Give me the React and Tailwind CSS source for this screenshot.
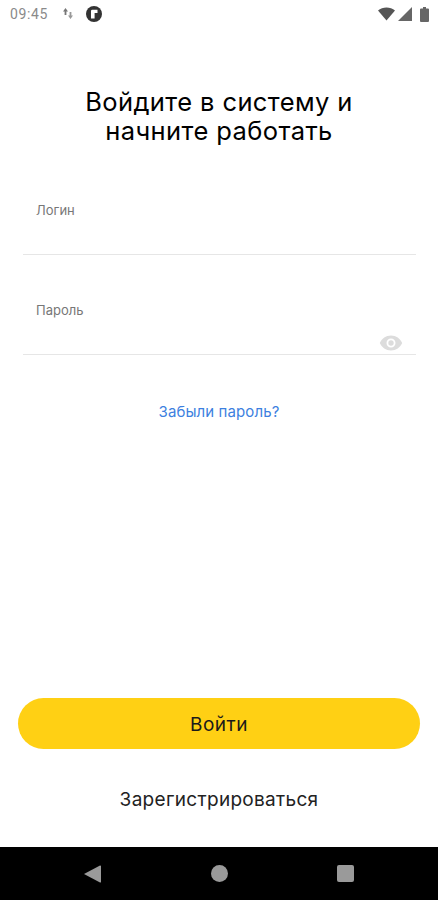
export default function App() {
  return (
    <div className="w-[438px] h-[900px] flex flex-col bg-white overflow-hidden font-['Inter',sans-serif]">
      <div className="h-[28px] flex items-center pl-[10px] pr-[9px] shrink-0">
        <span className="text-[14px] leading-none text-[#8a8a8a] font-['Roboto',sans-serif] tracking-[0.6px]">09:45</span>
        <svg className="ml-[15px]" width="10" height="14" viewBox="0 0 10 14" fill="#777">
          <path d="M2.5 1 L5 4.5 H3.4 V8 H1.6 V4.5 H0 Z" />
          <path d="M7.5 12 L5 8.5 H6.6 V5 H8.4 V8.5 H10 Z" fill="#999" />
        </svg>
        <svg className="ml-[13px]" width="16" height="16" viewBox="0 0 16 16">
          <circle cx="8" cy="8" r="8" fill="#333" />
          <path d="M5 12.5 V5 A1.2 1.2 0 0 1 6.2 3.8 H11.5 V7 H8.6 V12.5 Z" fill="#fff" />
        </svg>
        <div className="flex-1" />
        <svg width="17" height="14" viewBox="0 0 17 14" fill="#555">
          <path d="M0 3.5 C4.5 -0.5 12.5 -0.5 17 3.5 L8.5 13.5 Z" />
        </svg>
        <svg className="ml-[3px]" width="14" height="14" viewBox="0 0 14 14" fill="#666">
          <path d="M0 14 L14 0 V14 Z" />
        </svg>
        <svg className="ml-[8px]" width="9" height="15" viewBox="0 0 9 15" fill="#666">
          <path d="M3 0 H6 V1.5 H8 A1 1 0 0 1 9 2.5 V14 A1 1 0 0 1 8 15 H1 A1 1 0 0 1 0 14 V2.5 A1 1 0 0 1 1 1.5 H3 Z" />
        </svg>
      </div>

      <h1 className="mt-[59px] text-center text-[25.5px] leading-[29px] font-normal text-black tracking-[0.4px]">
        Войдите в систему и<br />начните работать
      </h1>

      <div className="mt-[58px] ml-[23px] mr-[22px] h-[52px] border-b border-[#e6e6e6] pl-[13px] shrink-0">
        <span className="block text-[13px] leading-[15px] text-[#777]">Логин</span>
      </div>
      <div className="relative mt-[48px] ml-[23px] mr-[22px] h-[52px] border-b border-[#e6e6e6] pl-[13px] shrink-0">
        <span className="block text-[13px] leading-[15px] text-[#777]">Пароль</span>
        <svg className="absolute right-[13px] bottom-[3px]" width="24" height="16" viewBox="0 0 24 16">
          <path fillRule="evenodd" fill="#dcdcdc" d="M12 0.5 C17 0.5 21.3 3.5 23.2 8 C21.3 12.5 17 15.5 12 15.5 C7 15.5 2.7 12.5 0.8 8 C2.7 3.5 7 0.5 12 0.5 Z M12 3.5 A4.5 4.5 0 1 0 12 12.5 A4.5 4.5 0 1 0 12 3.5 Z" />
          <circle cx="12" cy="8" r="2.7" fill="#dcdcdc" />
        </svg>
      </div>

      <a className="mt-[47px] text-center text-[15px] leading-[20px] text-[#3d7fe0] tracking-[0.1px]">Забыли пароль?</a>

      <div className="flex-1" />

      <button className="ml-[18px] mr-[18px] h-[51px] pt-[3px] rounded-full bg-[#ffd014] text-[19px] text-[#1a1a1a] tracking-[0.5px] shrink-0">Войти</button>
      <a className="mt-[38px] mb-[34px] text-center text-[19px] leading-[26px] text-[#222] tracking-[0.3px]">Зарегистрироваться</a>

      <div className="h-[53px] bg-black flex items-center shrink-0 relative">
        <svg className="ml-[84px]" width="17" height="18" viewBox="0 0 17 18" fill="#9a9a9a">
          <path d="M0 9 L16 0.5 A0.8 0.8 0 0 1 17 1 V17 A0.8 0.8 0 0 1 16 17.5 Z" />
        </svg>
        <div className="ml-[110px] w-[17px] h-[17px] rounded-full bg-[#9a9a9a]" />
        <div className="ml-[109px] w-[17px] h-[17px] rounded-[2px] bg-[#9a9a9a]" />
      </div>
    </div>
  );
}
